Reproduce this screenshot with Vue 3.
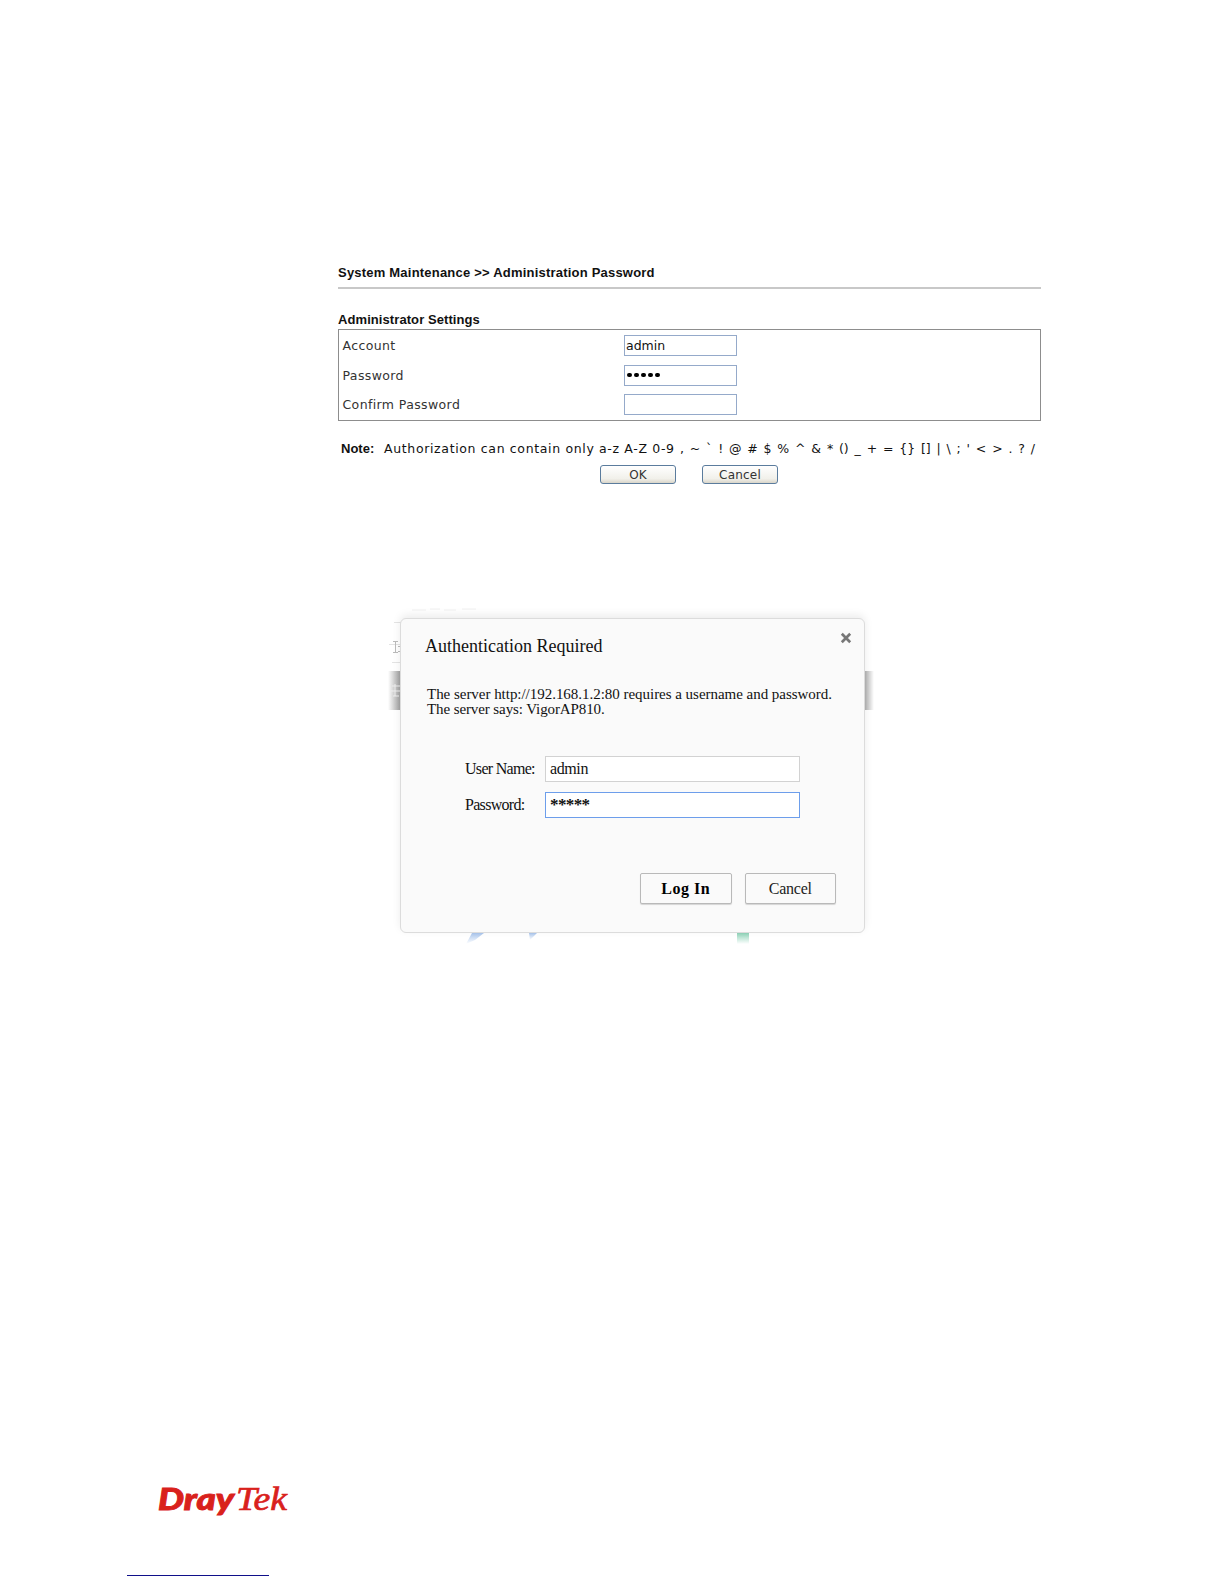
<template>
  <div class="page">
    <section class="maintenance">
      <h1 class="heading"><span class="heading-text">System Maintenance &gt;&gt; Administration Password</span></h1>
      <h2 class="subheading"><span class="subheading-text">Administrator Settings</span></h2>
      <div class="settings">
        <div v-for="field in fields" :key="field.label" class="settings-row">
          <label class="settings-label" :for="field.id">{{ field.label }}</label>
          <div :id="field.id" class="settings-input">
            <span v-if="!field.masked">{{ field.value }}</span>
            <span v-else class="dots">
              <i v-for="n in field.value.length" :key="n" class="dot"></i>
            </span>
          </div>
        </div>
      </div>
      <div class="note">
        <b class="note-label">Note:</b>
        <span class="note-text">{{ noteText }}</span>
        <span class="note-chars">
          <span v-for="(c, i) in chars" :key="i">{{ c }}</span>
        </span>
      </div>
      <div class="actions">
        <button class="xp-button">OK</button>
        <button class="xp-button">Cancel</button>
      </div>
    </section>

    <section class="auth">
      <svg class="backdrop" width="500" height="350" viewBox="0 0 500 350">
        <defs>
          <linearGradient id="bandLeft">
            <stop offset="0" stop-color="#fff" />
            <stop offset="1" stop-color="#999" />
          </linearGradient>
          <linearGradient id="bandRight">
            <stop offset="0" stop-color="#aaa" />
            <stop offset="1" stop-color="#fff" />
          </linearGradient>
          <linearGradient id="blueFade" x2="0" y2="1">
            <stop offset="0" stop-color="#a9c5ec" />
            <stop offset="1" stop-color="#fff" />
          </linearGradient>
          <linearGradient id="greenFade" x2="0" y2="1">
            <stop offset="0" stop-color="#8fd3b8" />
            <stop offset="1" stop-color="#fff" />
          </linearGradient>
        </defs>
        <rect x="8" y="71" width="13" height="39" fill="url(#bandLeft)" />
        <rect x="484" y="71" width="10" height="39" fill="url(#bandRight)" />
        <path d="M14 22.5h7M9 44.5h12M12 62.5h9" stroke="#e4e4e4" />
        <path d="M15.5 41v12M13 41.5h5M13 52.5h5M18 46.5h2M18 51.5h2" stroke="#bbb" />
        <path d="M12 86h8M15 84v12M11 91h9M13 96h6" stroke="#eee" />
        <path d="M32 10h14M50 9h10M64 10h12M82 9h14" stroke="#f0f0f0" />
        <path d="M92 333h12l-9 7-9 4z" fill="url(#blueFade)" />
        <path d="M149 333h8l-7 7z" fill="url(#blueFade)" />
        <rect x="357" y="333" width="12" height="11" fill="url(#greenFade)" />
      </svg>
      <div class="dialog">
        <div class="dialog-head">
          <h3 class="dialog-title">Authentication Required</h3>
          <svg class="close" width="12" height="12" viewBox="0 0 12 12">
            <path d="M1.8 1.8l8.4 8.4M10.2 1.8l-8.4 8.4" stroke="#777" stroke-width="2.7" />
          </svg>
        </div>
        <p class="message">
          <span class="server-line">The server http://192.168.1.2:80 requires a username and password.</span><br />
          <span class="says-line">The server says: VigorAP810.</span>
        </p>
        <div class="login-form">
          <span class="login-label">User Name:</span>
          <div class="login-input">admin</div>
          <span class="login-label">Password:</span>
          <div class="login-input focused"><span class="stars">*****</span></div>
        </div>
        <div class="dialog-actions">
          <button class="dialog-button primary">Log In</button>
          <button class="dialog-button">Cancel</button>
        </div>
      </div>
    </section>

    <footer class="footer">
      <svg class="logo" width="134" height="36" viewBox="0 0 134 36">
        <text class="logo-dray" x="0" y="25" textLength="76" lengthAdjust="spacingAndGlyphs">Dray</text>
        <text class="logo-tek" x="78" y="25" textLength="51" lengthAdjust="spacingAndGlyphs">Tek</text>
      </svg>
      <div class="footer-line"></div>
    </footer>
  </div>
</template>

<script setup>
const fields = [
  { id: 'account', label: 'Account', value: 'admin', masked: false },
  { id: 'password', label: 'Password', value: 'admin', masked: true },
  { id: 'confirm', label: 'Confirm Password', value: '', masked: false },
];

const noteText = 'Authorization can contain only a-z A-Z 0-9';
const chars = [
  ',', '~', '`', '!', '@', '#', '$', '%', '^', '&', '*', '()', '_', '+', '=',
  '{}', '[]', '|', '\\', ';', "'", '<', '>', '.', '?', '/',
];
</script>

<style>
body {
  margin: 0;
  background: #fff;
}
</style>

<style scoped>
.page {
  box-sizing: border-box;
  width: 1224px;
  height: 1584px;
  padding-top: 263px;
  display: flex;
  flex-direction: column;
  overflow: hidden;
  background: #fff;
  color: #111;
}

.maintenance {
  width: 703px;
  margin-left: 338px;
  font-family: Verdana, 'DejaVu Sans', sans-serif;
  font-size: 12.5px;
}

.heading,
.subheading {
  margin: 0;
  font-family: 'Liberation Sans', Arial, sans-serif;
  font-size: 13px;
  line-height: 20px;
  white-space: nowrap;
}

.heading {
  height: 24px;
  border-bottom: 2px solid #c8c8c8;
}

.heading-text {
  letter-spacing: 0.21px;
}

.subheading {
  height: 19px;
  padding-top: 21px;
}

.subheading-text {
  letter-spacing: 0.08px;
}

.settings {
  box-sizing: border-box;
  height: 92px;
  padding: 5px 0 0 3.5px;
  border: 1px solid #8d8d8d;
  display: flex;
  flex-direction: column;
  gap: 8.5px;
}

.settings-row {
  display: flex;
  align-items: center;
  height: 21px;
}

.settings-label {
  width: 281.5px;
  color: #333;
  letter-spacing: 0.38px;
}

.settings-input {
  box-sizing: border-box;
  width: 113px;
  height: 21px;
  padding-left: 1px;
  border: 1px solid #95aaca;
  display: flex;
  align-items: center;
  line-height: 18px;
}

.dots {
  display: flex;
  gap: 2.5px;
  padding-left: 1px;
}

.dot {
  width: 4.5px;
  height: 4.5px;
  border-radius: 50%;
  background: #000;
}

.note {
  height: 20px;
  margin-top: 17px;
  padding-left: 3px;
  display: flex;
  align-items: center;
  white-space: nowrap;
}

.note-label {
  width: 43px;
  font-family: 'Liberation Sans', Arial, sans-serif;
  font-size: 13px;
}

.note-text {
  width: 296px;
  letter-spacing: 0.65px;
}

.note-chars {
  width: 355px;
  display: flex;
  justify-content: space-between;
}

.actions {
  display: flex;
  gap: 26px;
  padding: 7px 0 0 262px;
}

.xp-button {
  box-sizing: border-box;
  width: 76px;
  height: 19px;
  padding: 0;
  border: 1px solid #5b7c9d;
  border-radius: 3px;
  background: linear-gradient(#fff, #f1f0ea 75%, #d9d5c9);
  color: #333;
  font-family: Verdana, 'DejaVu Sans', sans-serif;
  font-size: 12px;
  letter-spacing: 0.2px;
  line-height: 16px;
}

.auth {
  position: relative;
  margin: 134px 0 0 400px;
  font-family: 'Liberation Serif', serif;
}

.backdrop {
  position: absolute;
  left: -20px;
  top: -18px;
}

.dialog {
  position: relative;
  box-sizing: border-box;
  width: 465px;
  height: 315px;
  border: 1px solid #dcdcdc;
  border-radius: 6px;
  background: #fafafa;
  box-shadow: 0 -3px 8px rgba(0, 0, 0, 0.08);
  color: #111;
}

.dialog-head {
  display: flex;
  justify-content: space-between;
  padding: 13px 12px 0 24px;
}

.dialog-title {
  margin: 3px 0 0;
  font-size: 18px;
  font-weight: normal;
  line-height: 22px;
}

.message {
  margin: 30px 0 0 26px;
  font-size: 15px;
  line-height: 15px;
  letter-spacing: -0.03px;
  white-space: nowrap;
}

.says-line {
  letter-spacing: -0.1px;
}

.login-form {
  display: grid;
  grid-template-columns: 80px 255px;
  row-gap: 10px;
  padding: 39px 0 0 64px;
  font-size: 16px;
  align-items: center;
}

.login-label {
  letter-spacing: -0.7px;
}

.login-input {
  box-sizing: border-box;
  height: 26px;
  padding-left: 4px;
  border: 1px solid #d2d2d2;
  background: #fff;
  letter-spacing: -0.4px;
  line-height: 24px;
}

.login-input.focused {
  border-color: #6d9eeb;
}

.stars {
  font-size: 17px;
  font-weight: bold;
  letter-spacing: -0.6px;
}

.dialog-actions {
  display: flex;
  gap: 13px;
  padding: 55px 0 0 239px;
}

.dialog-button {
  box-sizing: border-box;
  width: 91.5px;
  height: 31px;
  padding: 0;
  border: 1px solid #b9b9b9;
  border-radius: 2px;
  background: #fafafa;
  box-shadow: 0 1px 1px rgba(0, 0, 0, 0.15);
  color: #222;
  font-family: 'Liberation Serif', serif;
  font-size: 16px;
  letter-spacing: -0.25px;
}

.primary {
  color: #000;
  font-weight: bold;
  letter-spacing: 0.5px;
}

.footer {
  margin-top: auto;
  height: 101px;
}

.logo {
  display: block;
  margin-left: 158px;
  padding-top: 2px;
  overflow: visible;
  fill: #d9211c;
  stroke: #d9211c;
}

.logo-dray {
  font-family: Lato, sans-serif;
  font-size: 31px;
  font-weight: 900;
  font-style: italic;
  stroke-width: 0.9px;
}

.logo-tek {
  font-family: 'Liberation Serif', serif;
  font-size: 34px;
  font-style: italic;
  stroke-width: 0.7px;
}

.footer-line {
  width: 142px;
  height: 1px;
  margin: 54px 0 0 127px;
  background: #10108a;
}
</style>
